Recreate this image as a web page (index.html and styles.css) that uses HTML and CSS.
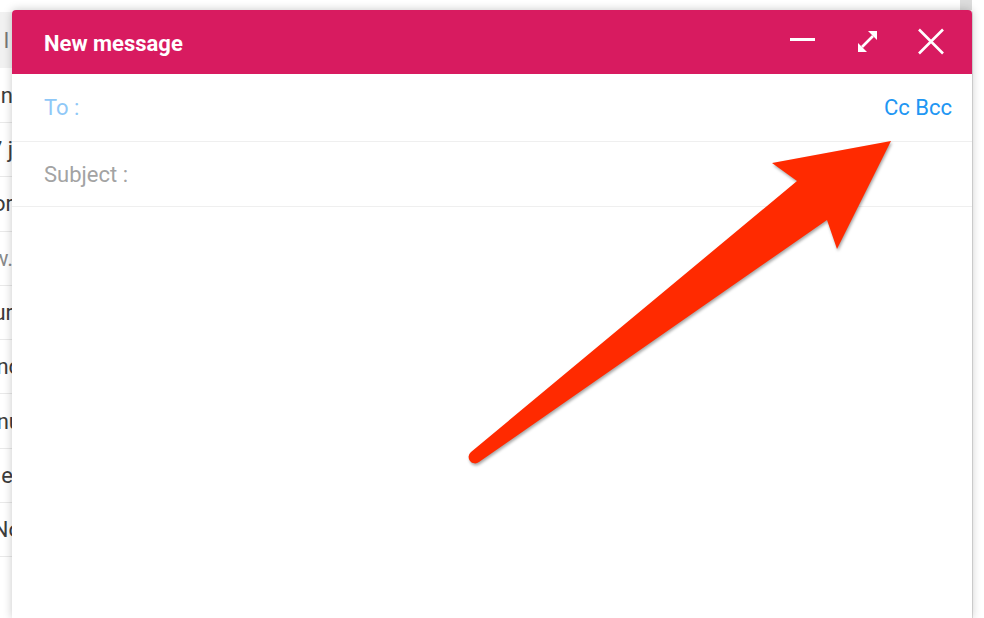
FILE: index.html
```html
<!DOCTYPE html>
<html lang="en">
<head>
<meta charset="utf-8">
<title>New message</title>
<link rel="stylesheet" href="styles.css">
</head>
<body>
<div class="page">
  <div class="list">
    <div class="list-head"><span class="clip">l</span></div>
    <div class="row first"><span class="clip">n</span></div>
    <div class="row"><span class="clip">7 j</span></div>
    <div class="row"><span class="clip">or</span></div>
    <div class="row light"><span class="clip">w.</span></div>
    <div class="row"><span class="clip">ur</span></div>
    <div class="row"><span class="clip wide">nd</span></div>
    <div class="row"><span class="clip wide">nu</span></div>
    <div class="row"><span class="clip">e</span></div>
    <div class="row"><span class="clip wide">No</span></div>
  </div>
  <div class="scroll"><div class="thumb"></div></div>
</div>

<div class="modal">
  <div class="modal-head">
    <div class="title">New message</div>
    <div class="actions">
      <svg class="ico min" width="28" height="28" viewBox="0 0 28 28"><rect x="0" y="10" width="25" height="3" fill="#fff"/></svg>
      <svg class="ico" width="28" height="28" viewBox="0 0 28 28">
        <line x1="6" y1="19" x2="17" y2="8" stroke="#fff" stroke-width="2.6"/>
        <polygon points="12,3 21,3 21,12" fill="#fff"/>
        <polygon points="2,15 2,24 11,24" fill="#fff"/>
      </svg>
      <svg class="ico" width="28" height="28" viewBox="0 0 28 28">
        <path d="M2 1.5 L26 25.5 M26 1.5 L2 25.5" stroke="#fff" stroke-width="2.6" fill="none"/>
      </svg>
    </div>
  </div>
  <div class="field to">
    <span class="label-to">To :</span>
    <span class="ccbcc">Cc Bcc</span>
  </div>
  <div class="field subject">
    <span class="label-sub">Subject :</span>
  </div>
  <div class="body"></div>
</div>

<svg class="arrow" width="984" height="618" viewBox="0 0 984 618">
  <path d="M471,452 L797,181 L772,163 L891,141 L837,249 L827,220 L479,462 A6.4,6.4 0 0 1 471,452 Z" fill="#ff2a00"/>
</svg>
</body>
</html>
```

FILE: styles.css
```css
html, body {
  margin: 0;
  padding: 0;
  background: #ffffff;
  width: 984px;
  height: 618px;
  overflow: hidden;
  font-family: Roboto, "Liberation Sans", Arial, sans-serif;
}

.page {
  display: flex;
  height: 618px;
}

.list {
  flex: 1;
  padding-top: 12px;
  display: flex;
  flex-direction: column;
}

.list-head {
  height: 56px;
  flex: none;
  background: #f1f1f1;
  display: flex;
  align-items: center;
  color: #777;
  font-size: 22px;
}

.row {
  height: 54.3px;
  flex: none;
  border-bottom: 1px solid #e9e9e9;
  box-sizing: border-box;
  display: flex;
  align-items: center;
  color: #3c3c3c;
  font-size: 22px;
}

.row.first {
  height: 55px;
}

.row.light {
  color: #8a8a8a;
}

.clip {
  display: flex;
  justify-content: flex-end;
  width: 13px;
  overflow: hidden;
  white-space: nowrap;
}

.clip.wide {
  width: 21px;
}

.list-head .clip {
  width: 9px;
}

.scroll {
  width: 24px;
}

.thumb {
  width: 12px;
  height: 10px;
  background: #dcdcdc;
}

.modal {
  position: absolute;
  left: 12px;
  top: 10px;
  width: 960px;
  height: 608px;
  background: #fff;
  border-radius: 4px 4px 0 0;
  box-shadow: 0 0 10px rgba(0, 0, 0, 0.22), 1px 0 0 rgba(0, 0, 0, 0.12);
  display: flex;
  flex-direction: column;
}

.modal-head {
  height: 64px;
  flex: none;
  background: #d81b60;
  border-radius: 4px 4px 0 0;
  display: flex;
  align-items: center;
  justify-content: space-between;
  padding: 0 27px 0 32px;
}

.title {
  color: #fff;
  font-weight: 700;
  font-size: 22px;
  margin-top: 2px;
}

.actions {
  display: flex;
  align-items: center;
  gap: 33px;
}

.ico {
  display: block;
}

.ico.min {
  margin-right: 5px;
}

.field {
  display: flex;
  flex: none;
  align-items: center;
  justify-content: space-between;
  padding: 0 20px 0 32px;
  border-bottom: 1px solid #efefef;
  font-size: 22px;
}

.to {
  height: 68px;
  box-sizing: border-box;
}

.subject {
  height: 65px;
  box-sizing: border-box;
}

.label-to {
  color: #8fc8f7;
}

.ccbcc {
  color: #2196f3;
}

.label-sub {
  color: #a3a3a3;
}

.body {
  flex: 1;
}

.arrow {
  position: absolute;
  left: 0;
  top: 0;
  pointer-events: none;
  filter: drop-shadow(1px 2px 1.5px rgba(0, 0, 0, 0.35));
}
```
